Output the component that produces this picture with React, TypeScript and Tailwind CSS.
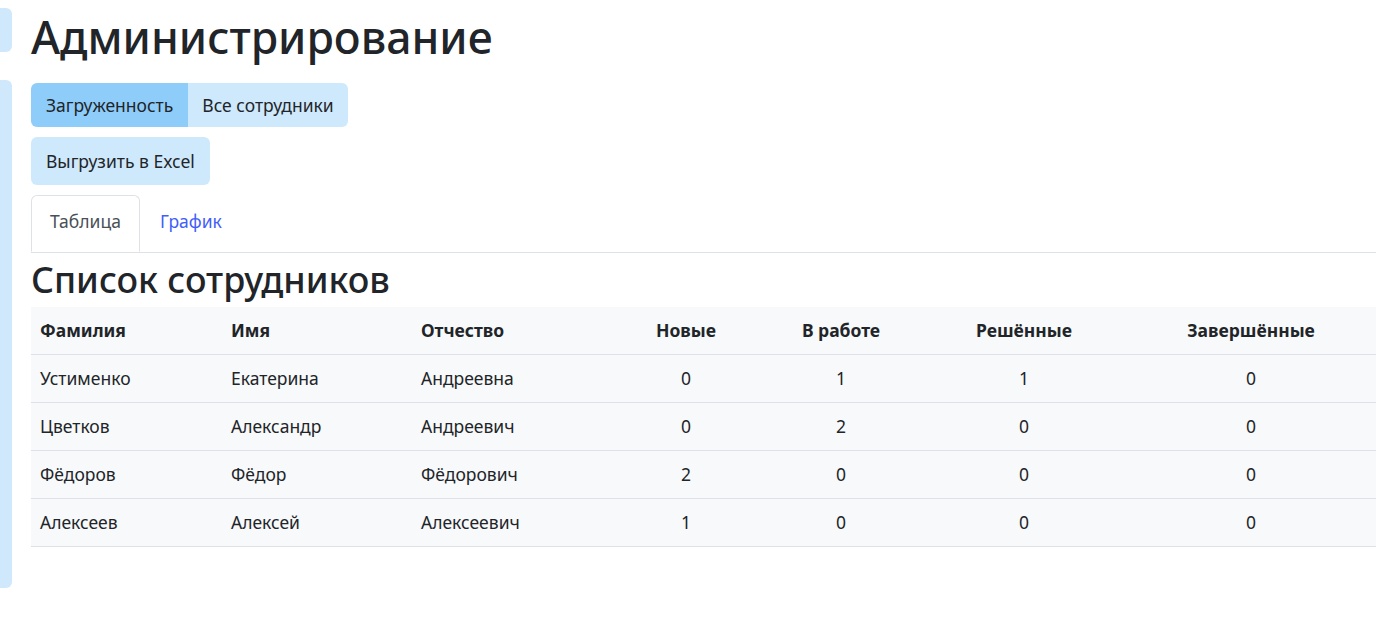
const rows = [
  { last: "Устименко", first: "Екатерина", middle: "Андреевна", n: 0, w: 1, r: 1, d: 0 },
  { last: "Цветков", first: "Александр", middle: "Андреевич", n: 0, w: 2, r: 0, d: 0 },
  { last: "Фёдоров", first: "Фёдор", middle: "Фёдорович", n: 2, w: 0, r: 0, d: 0 },
  { last: "Алексеев", first: "Алексей", middle: "Алексеевич", n: 1, w: 0, r: 0, d: 0 },
];

export default function App() {
  return (
    <div className="flex min-h-screen bg-white pr-2 font-['Noto_Sans',sans-serif] text-[17.5px] text-[#212529]">
      <aside className="flex w-3 shrink-0 flex-col gap-7 pt-2">
        <div className="h-11 rounded-r-md bg-[#cfe8fc]" />
        <div className="h-[508px] rounded-r-md bg-[#cfe8fc]" />
      </aside>
      <main className="ml-[19px] flex min-w-0 flex-1 flex-col">
        <h1 className="mt-[11px] text-[44.5px] font-medium leading-[52px]">Администрирование</h1>
        <div className="mt-[20px] flex">
          <div className="flex overflow-hidden rounded-md">
            <button className="h-11 bg-[#8ecdfa] px-[15px]">Загруженность</button>
            <button className="h-11 bg-[#cfe9fc] px-[14px]">Все сотрудники</button>
          </div>
        </div>
        <div className="mt-[10px] flex">
          <button className="h-12 rounded-md bg-[#cfe9fc] px-[15px]">Выгрузить в Excel</button>
        </div>
        <div className="mt-[10px] flex border-b border-[#dee2e6]">
          <div className="-mb-px flex h-[57px] w-[109px] items-center justify-center rounded-t-md border border-b-white border-[#dee2e6] bg-white pb-1 text-[#495057]">
            Таблица
          </div>
          <div className="flex h-[57px] items-center px-5 pb-1 text-[#3f5efb]">График</div>
        </div>
        <h2 className="mt-[3px] text-[35.8px] font-medium leading-[46px]">Список сотрудников</h2>
        <table className="mt-[5px] w-full border-collapse">
          <thead>
            <tr className="h-[47px] border-b border-[#dee2e6] bg-[#f8f9fa] font-bold">
              <th className="w-[191px] px-[9px] text-left">Фамилия</th>
              <th className="w-[190px] px-[9px] text-left">Имя</th>
              <th className="w-[200px] px-[9px] text-left">Отчество</th>
              <th className="w-[148px] text-center">Новые</th>
              <th className="w-[162px] text-center">В работе</th>
              <th className="w-[204px] text-center">Решённые</th>
              <th className="text-center">Завершённые</th>
            </tr>
          </thead>
          <tbody>
            {rows.map((p) => (
              <tr key={p.last} className="h-[48px] border-b border-[#dee2e6] bg-[#f8f9fa]">
                <td className="px-[9px]">{p.last}</td>
                <td className="px-[9px]">{p.first}</td>
                <td className="px-[9px]">{p.middle}</td>
                <td className="text-center">{p.n}</td>
                <td className="text-center">{p.w}</td>
                <td className="text-center">{p.r}</td>
                <td className="text-center">{p.d}</td>
              </tr>
            ))}
          </tbody>
        </table>
      </main>
    </div>
  );
}
